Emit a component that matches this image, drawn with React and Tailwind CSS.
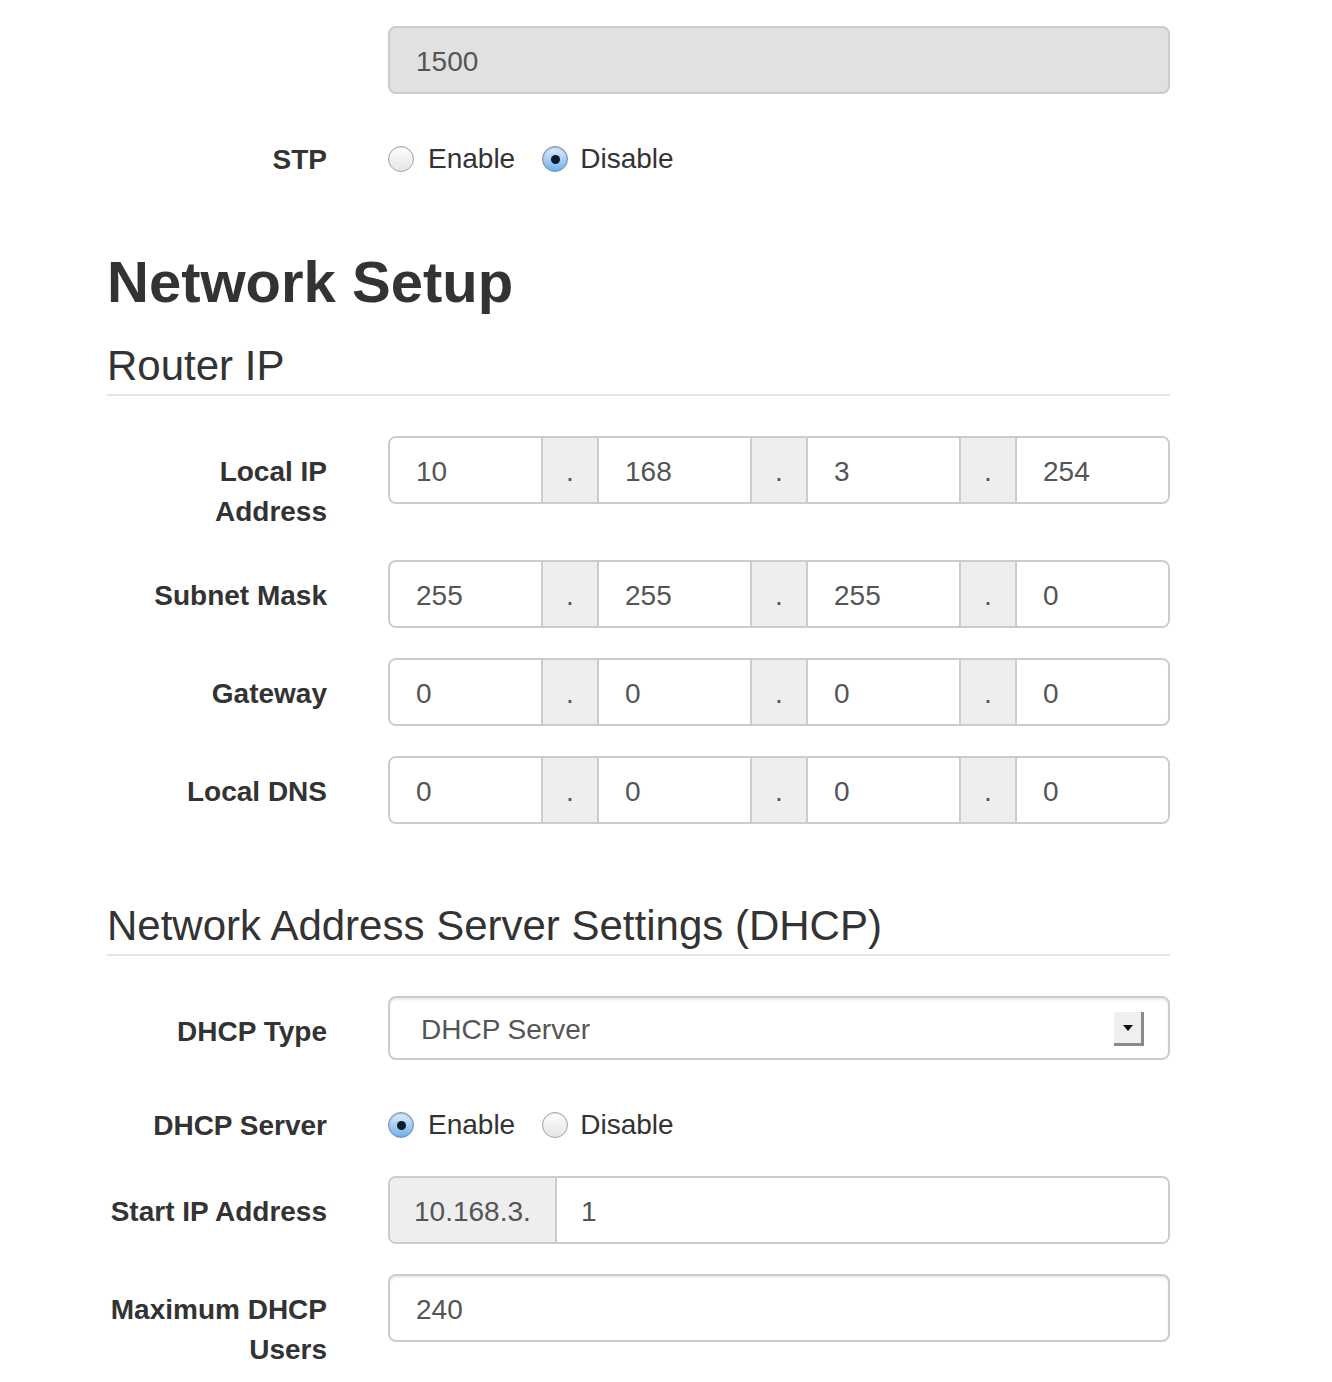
import React from "react";

const FONT = { fontFamily: '"Liberation Sans", Arial, Helvetica, sans-serif' };

function Radio({ checked }) {
  return checked ? (
    <span className="relative inline-flex items-center justify-center w-[26px] h-[26px] rounded-full border border-[#6f8fb8] bg-gradient-to-b from-[#e3f0ff] via-[#a9d0f7] to-[#6eaef0] shadow-[inset_0_1px_2px_rgba(0,0,0,0.25)]">
      <span className="w-[9px] h-[9px] rounded-full bg-[#0f1a2a]" />
    </span>
  ) : (
    <span className="inline-block w-[26px] h-[26px] rounded-full border border-[#a3a3a3] bg-gradient-to-b from-[#ffffff] to-[#e4e4e4] shadow-[inset_0_1px_1px_rgba(0,0,0,0.1)]" />
  );
}

function RadioGroup({ value }) {
  return (
    <div className="flex items-center pt-[16px] h-[54px]">
      <div className="flex items-center h-[40px]">
        <Radio checked={value === "enable"} />
        <span className="ml-[14px] text-[28px] leading-[40px] text-[#333]">Enable</span>
      </div>
      <div className="flex items-center h-[40px] ml-[27px]">
        <Radio checked={value === "disable"} />
        <span className="ml-[12px] text-[28px] leading-[40px] text-[#333]">Disable</span>
      </div>
    </div>
  );
}

function Row({ label, children, className = "" }) {
  return (
    <div className={"flex items-start " + className}>
      <div className="w-[220px] shrink-0 pt-[16px] text-right font-bold text-[28px] leading-[40px] text-[#333] whitespace-nowrap">
        {label}
      </div>
      <div className="ml-[61px] w-[782px]">{children}</div>
    </div>
  );
}

function IpGroup({ parts }) {
  const cells = [];
  parts.forEach((p, i) => {
    if (i > 0) {
      cells.push(
        <div
          key={"a" + i}
          className="w-[56px] shrink-0 border-l-2 border-[#ccc] bg-[#eeeeee] flex items-center justify-center text-[28px] leading-[40px] text-[#555]"
        >
          <span className="pt-[4px]">.</span>
        </div>
      );
    }
    cells.push(
      <div
        key={"i" + i}
        className={
          "flex-1 flex items-center pt-[4px] pl-[26px] text-[28px] leading-[40px] text-[#555] bg-white " +
          (i > 0 ? "border-l-2 border-[#ccc]" : "")
        }
      >
        {p}
      </div>
    );
  });
  return (
    <div className="flex h-[68px] border-2 border-[#ccc] rounded-[8px] overflow-hidden shadow-[inset_0_2px_2px_rgba(0,0,0,0.075)]">
      {cells}
    </div>
  );
}

function Legend({ children, className = "" }) {
  return (
    <div
      className={
        "h-[62px] pt-[4px] border-b-2 border-[#e5e5e5] text-[42px] leading-[56px] text-[#333] " + className
      }
    >
      {children}
    </div>
  );
}

export default function App() {
  return (
    <div style={FONT} className="bg-white min-h-[1382px] w-[1332px] pl-[107px] pt-[26px]">
      <div className="w-[1063px]">
        {/* MTU field */}
        <div className="flex">
          <div className="w-[220px] shrink-0" />
          <div className="ml-[61px] w-[782px] h-[68px] border-2 border-[#ccc] rounded-[8px] bg-[#e1e1e1] flex items-center pt-[4px] pl-[26px] text-[28px] leading-[40px] text-[#555]">
            1500
          </div>
        </div>

        <Row label="STP" className="mt-[30px]">
          <RadioGroup value="disable" />
        </Row>

        <h2 className="mt-[66px] pt-[4px] text-[58px] leading-[64px] font-bold text-[#333]">Network Setup</h2>
        <Legend className="mt-[20px]">Router IP</Legend>

        <Row label={<>Local IP<br />Address</>} className="mt-[40px]">
          <IpGroup parts={["10", "168", "3", "254"]} />
        </Row>
        <Row label="Subnet Mask" className="mt-[28px]">
          <IpGroup parts={["255", "255", "255", "0"]} />
        </Row>
        <Row label="Gateway" className="mt-[30px]">
          <IpGroup parts={["0", "0", "0", "0"]} />
        </Row>
        <Row label="Local DNS" className="mt-[30px]">
          <IpGroup parts={["0", "0", "0", "0"]} />
        </Row>

        <Legend className="mt-[70px]">Network Address Server Settings (DHCP)</Legend>

        <Row label="DHCP Type" className="mt-[40px]">
          <div className="relative h-[64px] border-2 border-[#ccc] rounded-[8px] bg-white flex items-center pt-[4px] pl-[31px] text-[28px] leading-[40px] text-[#555] shadow-[inset_0_2px_2px_rgba(0,0,0,0.075)]">
            DHCP Server
            <div className="absolute right-[24px] top-[14px] w-[30px] h-[34px] bg-[#efefef] border-r-[3px] border-b-[3px] border-[#8a8a8a] flex items-center justify-center">
              <svg width="10" height="6" viewBox="0 0 10 6">
                <path d="M0 0 L10 0 L5 6 Z" fill="#111" />
              </svg>
            </div>
          </div>
        </Row>

        <Row label="DHCP Server" className="mt-[30px]">
          <RadioGroup value="enable" />
        </Row>

        <Row label="Start IP Address" className="mt-[30px]">
          <div className="flex h-[68px] border-2 border-[#ccc] rounded-[8px] overflow-hidden">
            <div className="w-[165px] shrink-0 bg-[#eeeeee] flex items-center pt-[4px] pl-[24px] text-[28px] leading-[40px] text-[#555]">
              10.168.3.
            </div>
            <div className="flex-1 border-l-2 border-[#ccc] bg-white flex items-center pt-[4px] pl-[24px] text-[28px] leading-[40px] text-[#555]">
              1
            </div>
          </div>
        </Row>

        <Row label={<>Maximum DHCP<br />Users</>} className="mt-[30px]">
          <div className="h-[68px] border-2 border-[#ccc] rounded-[8px] bg-white flex items-center pt-[4px] pl-[26px] text-[28px] leading-[40px] text-[#555] shadow-[inset_0_2px_2px_rgba(0,0,0,0.075)]">
            240
          </div>
        </Row>
      </div>
    </div>
  );
}
